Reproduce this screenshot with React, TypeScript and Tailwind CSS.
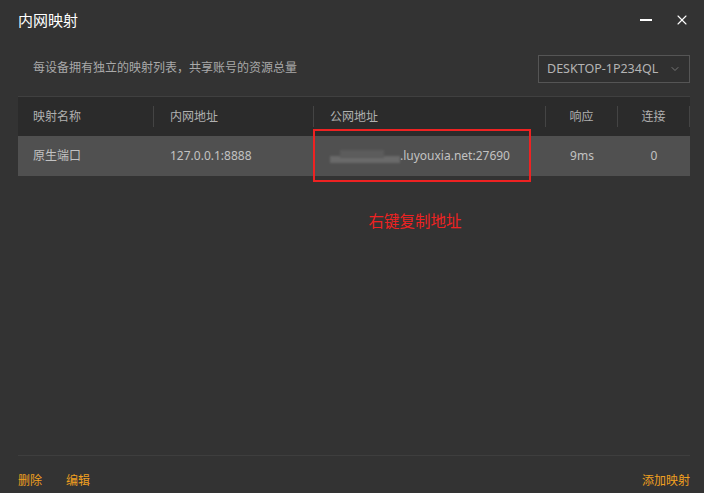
import { X, ChevronDown } from "lucide-react";

const font = {
  fontFamily: '"Noto Sans", "Noto Sans CJK SC", sans-serif',
};

function App() {
  return (
    <div
      className="w-[704px] h-[493px] bg-[#333333] flex flex-col overflow-hidden"
      style={font}
    >
      {/* title bar */}
      <div className="h-[40px] flex items-center pl-[18px] pr-[14px]">
        <h1 className="text-white text-[15px]">内网映射</h1>
        <div className="ml-auto flex items-center gap-[22px]">
          <span className="w-[12px] h-[1.5px] bg-white block" />
          <X className="size-[16px] text-white" strokeWidth={1.6} />
        </div>
      </div>

      {/* subtitle + select */}
      <div className="h-[56px] flex items-center pl-[33px] pr-[14px]">
        <span className="text-[12px] text-[#a9a9a9]">
          每设备拥有独立的映射列表，共享账号的资源总量
        </span>
        <div className="ml-auto w-[152px] h-[28px] border border-[#555555] bg-[#303030] flex items-center pl-[8px] pr-[8px] mt-[2px]">
          <span className="text-[12.5px] text-[#b4b4b4]">DESKTOP-1P234QL</span>
          <ChevronDown className="ml-auto size-[12px] text-[#777777]" />
        </div>
      </div>

      {/* table */}
      <div className="ml-[18px] mr-[14px] border-t border-[#404040] relative">
        <div className="h-[39px] bg-[#2b2b2b] flex items-center text-[12px] text-[#b0b0b0]">
          <div className="w-[135px] pl-[15px]">映射名称</div>
          <div className="w-px h-[21px] bg-[#444444]" />
          <div className="w-[159px] pl-[16px]">内网地址</div>
          <div className="w-px h-[21px] bg-[#444444]" />
          <div className="w-[231px] pl-[16px]">公网地址</div>
          <div className="w-px h-[21px] bg-[#444444]" />
          <div className="w-[71px] text-center">响应</div>
          <div className="w-px h-[21px] bg-[#444444]" />
          <div className="w-[71px] text-center">连接</div>
          <div className="w-px h-[21px] bg-[#444444]" />
        </div>
        <div className="h-[40px] bg-[#505050] flex items-center text-[12px] text-[#c2c2c2]">
          <div className="w-[136px] pl-[15px]">原生端口</div>
          <div className="w-[160px] pl-[16px]">127.0.0.1:8888</div>
          <div className="w-[232px] pl-[16px] flex items-center">
            <span className="relative w-[70px] h-[12px] mt-[3px]">
              <span className="absolute left-[0px] top-[4px] w-[70px] h-[7px] bg-[#6a6a6a] blur-[1px]" />
              <span className="absolute left-[10px] top-[-2px] w-[44px] h-[8px] bg-[#5c5c5c] blur-[1px]" />
            </span>
            <span>.luyouxia.net:27690</span>
          </div>
          <div className="w-[72px] text-center">9ms</div>
          <div className="w-[72px] text-center">0</div>
        </div>
        <div className="absolute left-[295px] top-[32px] w-[218px] h-[53px] border-2 border-[#ee2222]" />
      </div>

      <div className="flex-1 flex justify-center pt-[34px]">
        <span className="text-[15.5px] text-[#ee2222] ml-[126px]">右键复制地址</span>
      </div>

      {/* footer */}
      <div className="ml-[18px] mr-[14px] border-t border-[#3e3e3e] h-[38px] flex items-end pb-[3px] text-[12px] text-[#f0a020]">
        <span>删除</span>
        <span className="ml-[24px]">编辑</span>
        <span className="ml-auto">添加映射</span>
      </div>
    </div>
  );
}

export default App;
